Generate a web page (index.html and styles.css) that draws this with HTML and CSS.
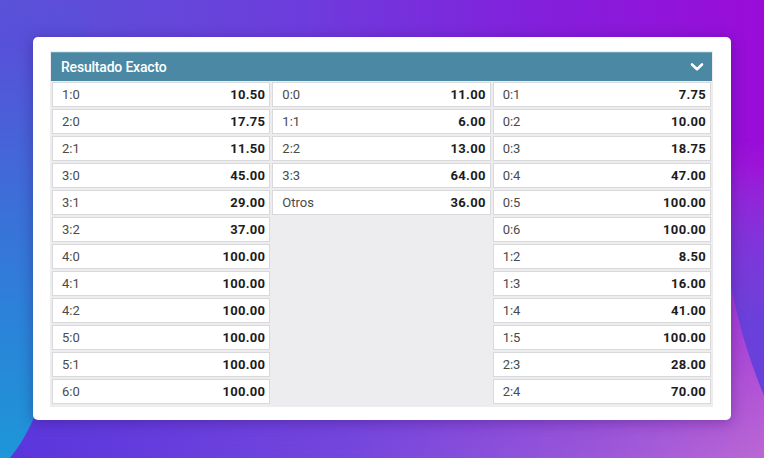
FILE: index.html
```html
<!DOCTYPE html>
<html lang="es">
<head>
<meta charset="utf-8">
<title>Resultado Exacto</title>
<link rel="stylesheet" href="styles.css">
</head>
<body>
<div class="stage">
<div class="bg-left"></div>
<div class="bg-right"></div>
<div class="card">
  <div class="panel">
    <div class="header">
      <span class="title">Resultado Exacto</span>
      <svg class="chevron" width="14" height="10" viewBox="0 0 14 10"><path d="M2 2.5 L7 7.2 L12 2.5" fill="none" stroke="#fff" stroke-width="2.6" stroke-linecap="round" stroke-linejoin="round"/></svg>
    </div>
    <div class="grid">
      <div class="col">
        <div class="cell"><span class="lbl">1:0</span><span class="odd">10.50</span></div>
        <div class="cell"><span class="lbl">2:0</span><span class="odd">17.75</span></div>
        <div class="cell"><span class="lbl">2:1</span><span class="odd">11.50</span></div>
        <div class="cell"><span class="lbl">3:0</span><span class="odd">45.00</span></div>
        <div class="cell"><span class="lbl">3:1</span><span class="odd">29.00</span></div>
        <div class="cell"><span class="lbl">3:2</span><span class="odd">37.00</span></div>
        <div class="cell"><span class="lbl">4:0</span><span class="odd">100.00</span></div>
        <div class="cell"><span class="lbl">4:1</span><span class="odd">100.00</span></div>
        <div class="cell"><span class="lbl">4:2</span><span class="odd">100.00</span></div>
        <div class="cell"><span class="lbl">5:0</span><span class="odd">100.00</span></div>
        <div class="cell"><span class="lbl">5:1</span><span class="odd">100.00</span></div>
        <div class="cell"><span class="lbl">6:0</span><span class="odd">100.00</span></div>
      </div>
      <div class="col">
        <div class="cell"><span class="lbl">0:0</span><span class="odd">11.00</span></div>
        <div class="cell"><span class="lbl">1:1</span><span class="odd">6.00</span></div>
        <div class="cell"><span class="lbl">2:2</span><span class="odd">13.00</span></div>
        <div class="cell"><span class="lbl">3:3</span><span class="odd">64.00</span></div>
        <div class="cell"><span class="lbl">Otros</span><span class="odd">36.00</span></div>
      </div>
      <div class="col">
        <div class="cell"><span class="lbl">0:1</span><span class="odd">7.75</span></div>
        <div class="cell"><span class="lbl">0:2</span><span class="odd">10.00</span></div>
        <div class="cell"><span class="lbl">0:3</span><span class="odd">18.75</span></div>
        <div class="cell"><span class="lbl">0:4</span><span class="odd">47.00</span></div>
        <div class="cell"><span class="lbl">0:5</span><span class="odd">100.00</span></div>
        <div class="cell"><span class="lbl">0:6</span><span class="odd">100.00</span></div>
        <div class="cell"><span class="lbl">1:2</span><span class="odd">8.50</span></div>
        <div class="cell"><span class="lbl">1:3</span><span class="odd">16.00</span></div>
        <div class="cell"><span class="lbl">1:4</span><span class="odd">41.00</span></div>
        <div class="cell"><span class="lbl">1:5</span><span class="odd">100.00</span></div>
        <div class="cell"><span class="lbl">2:3</span><span class="odd">28.00</span></div>
        <div class="cell"><span class="lbl">2:4</span><span class="odd">70.00</span></div>
      </div>
    </div>
  </div>
</div>
</div>
</body>
</html>
```
FILE: styles.css
```css
html, body {
  margin: 0;
  padding: 0;
}
body {
  font-family: Roboto, "Liberation Sans", sans-serif;
}
.stage {
  position: relative;
  width: 764px;
  height: 458px;
  overflow: hidden;
  background: linear-gradient(to right, #5a52d8 0%, #6c3edc 38%, #8320dc 70%, #9a0cd8 100%);
}
.stage::before {
  content: "";
  position: absolute;
  inset: 0;
  background: linear-gradient(to right, #5a34dc 0%, #7446dc 45%, #9a58d8 78%, #ba68d4 100%);
  -webkit-mask-image: linear-gradient(to bottom, transparent 30%, #000 100%);
  mask-image: linear-gradient(to bottom, transparent 30%, #000 100%);
  z-index: 0;
}
.bg-left {
  position: absolute;
  left: -141px;
  top: -280px;
  width: 226px;
  height: 760px;
  border-radius: 50%;
  background: linear-gradient(to bottom, rgba(90, 82, 216, 0) 36%, #5850d8 42%, #3d6ed8 63%, #2a84d8 80%, #1e96d8 97%);
  z-index: 1;
}
.bg-right {
  position: absolute;
  left: 720px;
  top: -224px;
  width: 460px;
  height: 780px;
  border-radius: 50%;
  background: linear-gradient(to bottom, rgba(120, 40, 216, 0) 50%, rgba(112, 56, 218, 0.7) 60%, #6a40da 70%, #6644da 100%);
  z-index: 1;
}
.card {
  position: relative;
  z-index: 2;
  margin: 37px 0 0 33px;
  width: 698px;
  height: 383px;
  box-sizing: border-box;
  padding: 14px 18px 13px 17px;
  background: #fff;
  border-radius: 5px;
  box-shadow: 0 2px 14px rgba(40, 10, 90, 0.35);
}
.panel {
  background: #ededef;
  padding: 1px 1px 3px 1px;
}
.header {
  height: 29px;
  box-sizing: border-box;
  display: flex;
  align-items: center;
  justify-content: space-between;
  padding: 0 8px 0 10px;
  background: #4a88a3;
  border-top: 1px solid #6fa3b9;
}
.title {
  color: #fff;
  font-size: 14px;
  font-weight: 500;
  letter-spacing: -0.2px;
}
.chevron {
  display: block;
}
.grid {
  display: grid;
  grid-template-columns: 1fr 1fr 1fr;
  column-gap: 2px;
  padding: 0 1px;
  margin-top: 1px;
}
.col {
  display: flex;
  flex-direction: column;
  gap: 2px;
}
.cell {
  height: 25px;
  box-sizing: border-box;
  display: flex;
  align-items: center;
  justify-content: space-between;
  padding: 0 4px 0 9px;
  background: #fff;
  border: 1px solid #d9d9db;
  font-size: 13px;
}
.lbl {
  color: #4a4a4a;
}
.odd {
  color: #1c1c1c;
  font-weight: 700;
  letter-spacing: 0.3px;
}
```
